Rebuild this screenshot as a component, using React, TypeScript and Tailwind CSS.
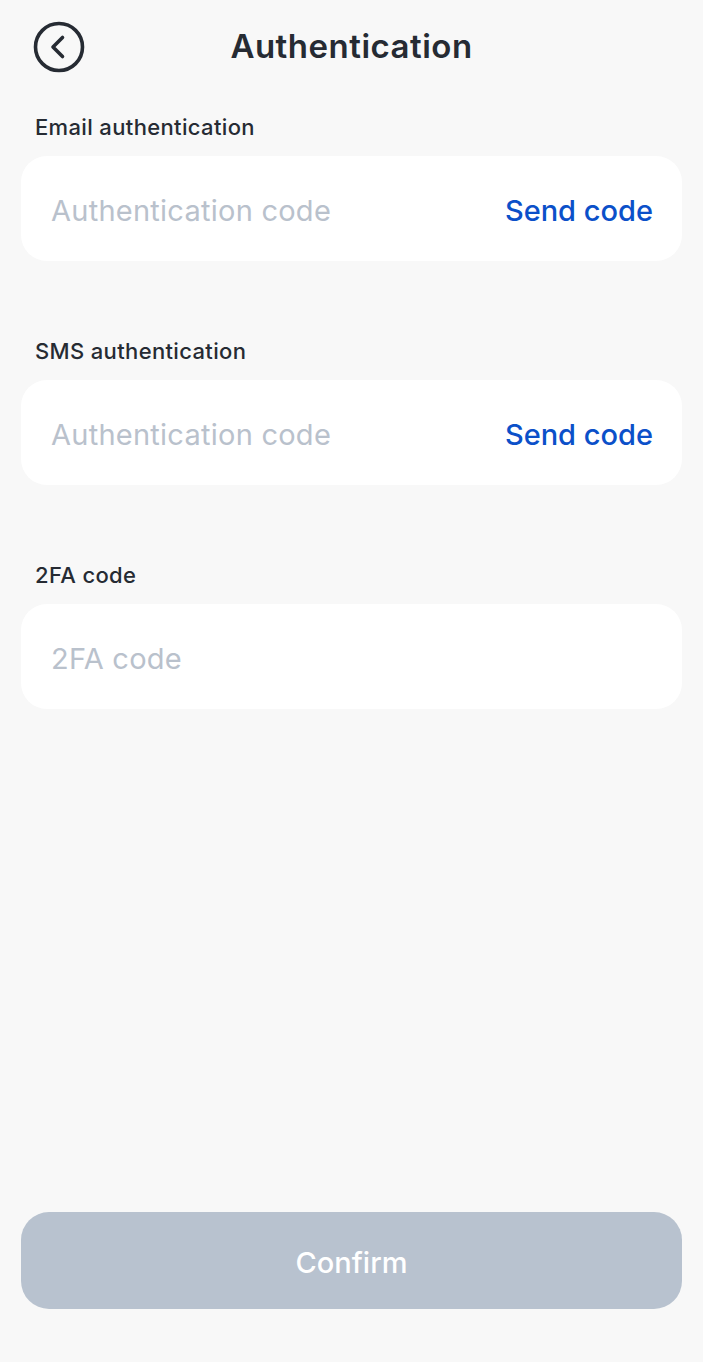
import React from 'react';

function Field({ label, placeholder, action }: { label: string; placeholder: string; action?: string }) {
  return (
    <div>
      <div className="px-[35px] text-[22px] leading-[28px] font-medium tracking-[0.35px] text-[#262b33]">{label}</div>
      <div className="mx-[21px] mt-[15px] h-[105px] rounded-[26px] bg-white flex items-center justify-between pl-[30px] pr-[29px] pt-[4px]">
        <span className="text-[29px] tracking-[0.25px] text-[#b9c1cc]">{placeholder}</span>
        {action && <span className="text-[29px] font-medium text-[#0b50c9]">{action}</span>}
      </div>
    </div>
  );
}

export default function App() {
  return (
    <div className="min-h-screen h-[1362px] bg-[#f8f8f8] flex flex-col" style={{ fontFamily: 'Inter, "Noto Sans", sans-serif' }}>
      {/* Header */}
      <div className="relative h-[94px] flex items-center justify-center">
        <button className="absolute left-[33px] top-[21px] w-[52px] h-[52px] text-[#262b33]">
          <svg viewBox="0 0 52 52" width="52" height="52" fill="none" stroke="currentColor" strokeWidth="3.6" strokeLinecap="round" strokeLinejoin="round">
            <circle cx="26" cy="26" r="23.5" />
            <path d="M29.5 16.5 L20 26 L29.5 35.5" />
          </svg>
        </button>
        <h1 className="text-[33px] font-semibold tracking-[0.5px] text-[#262b33]">Authentication</h1>
      </div>

      <div className="mt-[19px] flex flex-col gap-[76px]">
        <Field label="Email authentication" placeholder="Authentication code" action="Send code" />
        <Field label="SMS authentication" placeholder="Authentication code" action="Send code" />
        <Field label="2FA code" placeholder="2FA code" />
      </div>

      <button className="mt-auto mb-[53px] mx-[21px] h-[97px] rounded-[28px] bg-[#b8c2cf] pt-[4px] text-white text-[29px] font-medium">
        Confirm
      </button>
    </div>
  );
}
